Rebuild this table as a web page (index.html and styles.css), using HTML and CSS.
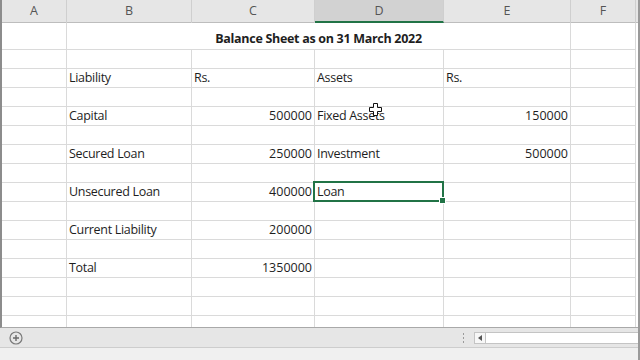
FILE: index.html
```html
<!DOCTYPE html>
<html>
<head>
<meta charset="utf-8">
<link rel="stylesheet" href="styles.css">
</head>
<body>
<div class="app">
  <div class="sheet">
    <div class="colhead">
      <div class="ch">A</div>
      <div class="ch">B</div>
      <div class="ch">C</div>
      <div class="ch sel">D</div>
      <div class="ch">E</div>
      <div class="ch">F</div>
    </div>
    <div class="grid">
      <div class="c tall"></div>
      <div class="c tall merged bold">Balance Sheet as on 31 March 2022</div>
      <div class="c tall"></div>

      <div class="c"></div><div class="c"></div><div class="c"></div><div class="c"></div><div class="c"></div><div class="c"></div>

      <div class="c"></div><div class="c">Liability</div><div class="c">Rs.</div><div class="c">Assets</div><div class="c">Rs.</div><div class="c"></div>
      <div class="c"></div><div class="c"></div><div class="c"></div><div class="c"></div><div class="c"></div><div class="c"></div>

      <div class="c"></div><div class="c">Capital</div><div class="c num">500000</div><div class="c">Fixed Assets</div><div class="c num">150000</div><div class="c"></div>
      <div class="c"></div><div class="c"></div><div class="c"></div><div class="c"></div><div class="c"></div><div class="c"></div>

      <div class="c"></div><div class="c">Secured Loan</div><div class="c num">250000</div><div class="c">Investment</div><div class="c num">500000</div><div class="c"></div>
      <div class="c"></div><div class="c"></div><div class="c"></div><div class="c"></div><div class="c"></div><div class="c"></div>

      <div class="c"></div><div class="c">Unsecured Loan</div><div class="c num">400000</div><div class="c active">Loan</div><div class="c"></div><div class="c"></div>
      <div class="c"></div><div class="c"></div><div class="c"></div><div class="c"></div><div class="c"></div><div class="c"></div>

      <div class="c"></div><div class="c">Current Liability</div><div class="c num">200000</div><div class="c"></div><div class="c"></div><div class="c"></div>
      <div class="c"></div><div class="c"></div><div class="c"></div><div class="c"></div><div class="c"></div><div class="c"></div>

      <div class="c"></div><div class="c">Total</div><div class="c num">1350000</div><div class="c"></div><div class="c"></div><div class="c"></div>
      <div class="c"></div><div class="c"></div><div class="c"></div><div class="c"></div><div class="c"></div><div class="c"></div>
      <div class="c"></div><div class="c"></div><div class="c"></div><div class="c"></div><div class="c"></div><div class="c"></div>
      <div class="c"></div><div class="c"></div><div class="c"></div><div class="c"></div><div class="c"></div><div class="c"></div>
    </div>
    <svg class="cursor" width="13" height="13" viewBox="0 0 13 13">
      <path d="M4.5 0.5h4v4h4v4h-4v4h-4v-4h-4v-4h4z" fill="#fff" stroke="#111" stroke-width="1"/>
    </svg>
  </div>
  <div class="tabbar">
    <svg class="addsheet" width="14" height="14" viewBox="0 0 14 14">
      <circle cx="7" cy="7" r="6" fill="none" stroke="#7a7a7a" stroke-width="1.2"/>
      <path d="M7 4v6M4 7h6" stroke="#6a6a6a" stroke-width="1.4"/>
    </svg>
    <div class="spacer"></div>
    <div class="dots"><span></span><span></span><span></span></div>
    <div class="hscroll">
      <div class="arrow"><svg width="5" height="6" viewBox="0 0 5 6"><path d="M4 0v6L0 3z" fill="#555"/></svg></div>
      <div class="track"></div>
    </div>
  </div>
  <div class="status"></div>
  <div class="redge"></div>
</div>
</body>
</html>
```

FILE: styles.css
```css
* { box-sizing: border-box; }
html, body { margin: 0; padding: 0; background: #fff; }
.app {
  position: relative;
  width: 640px;
  height: 360px;
  overflow: hidden;
  font-family: "Open Sans", "Liberation Sans", sans-serif;
  color: #1e1e1e;
}
.sheet {
  position: relative;
  height: 328px;
  border-left: 2px solid #8c8c8c;
  border-bottom: 1px solid #a9a9a9;
  overflow: hidden;
}
.colhead {
  display: grid;
  grid-template-columns: 65px 125px 123px 129px 127px 65px;
  height: 23px;
  background: #e6e6e6;
  border-bottom: 1px solid #bdbdbd;
}
.ch {
  border-right: 1px solid #cfcfcf;
  text-align: center;
  font-size: 12.5px;
  line-height: 22px;
  color: #555;
}
.ch.sel {
  background: #d2d2d2;
  border-bottom: 2px solid #217346;
  line-height: 21px;
}
.grid {
  display: grid;
  grid-template-columns: 65px 125px 123px 129px 127px 65px;
  grid-template-rows: 27px;
  grid-auto-rows: 19px;
}
.c {
  position: relative;
  border-right: 1px solid #dadada;
  border-bottom: 1px solid #dadada;
  font-size: 12.5px;
  line-height: 18px;
  padding: 0 2px;
  letter-spacing: -0.3px;
  white-space: nowrap;
}
.c.tall {
  grid-row: 1;
  display: flex;
  align-items: flex-end;
  padding-bottom: 1px;
}
.merged {
  grid-column: span 4;
  justify-content: center;
}
.bold { font-weight: 700; }
.num { text-align: right; padding-right: 2px; letter-spacing: 0; }
.active::after {
  content: "";
  position: absolute;
  left: -2px;
  top: -2px;
  right: -1px;
  bottom: -1px;
  border: 2px solid #217346;
}
.active::before {
  content: "";
  position: absolute;
  right: -3px;
  bottom: -3px;
  width: 5px;
  height: 5px;
  background: #217346;
  border: 1px solid #fff;
  z-index: 2;
}
.cursor {
  position: absolute;
  left: 367px;
  top: 103px;
}
.tabbar {
  display: flex;
  align-items: center;
  height: 20px;
  background: #e6e6e6;
  border-bottom: 1px solid #cdcdcd;
  padding-left: 9px;
}
.addsheet { display: block; }
.spacer { flex: 1; }
.dots {
  display: flex;
  flex-direction: column;
  gap: 2px;
  margin-right: 10px;
}
.dots span {
  display: block;
  width: 1px;
  height: 2px;
  background: #9a9a9a;
}
.hscroll {
  display: flex;
  width: 166px;
  height: 12px;
  background: #fff;
  border: 1px solid #c4c4c4;
  border-right: none;
}
.arrow {
  width: 11px;
  border-right: 1px solid #c4c4c4;
  display: flex;
  align-items: center;
  justify-content: center;
  background: #f7f7f7;
}
.arrow svg { display: block; }
.track { flex: 1; }
.status {
  height: 12px;
  background: #f0f0f0;
}
.redge {
  position: absolute;
  right: 0;
  top: 0;
  width: 2px;
  height: 360px;
  background: #9a9a9a;
}
```
